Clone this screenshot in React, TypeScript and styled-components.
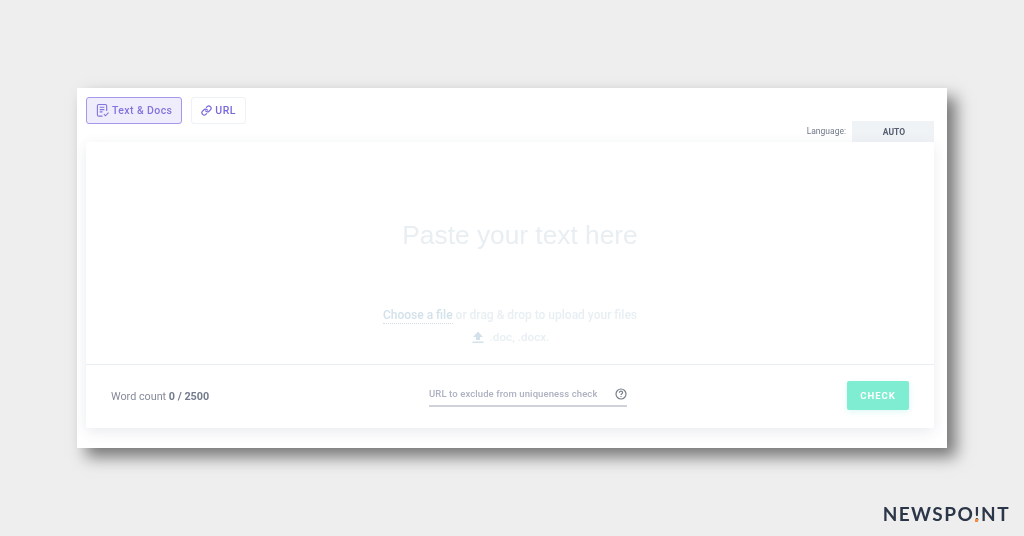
import React from "react";
import styled, {createGlobalStyle} from "styled-components";
import {Link} from "lucide-react";

const Global = createGlobalStyle`
  html, body {
    margin: 0;
    padding: 0;
    background-color: #eeeeee;
    font-family: Roboto, "Liberation Sans", sans-serif;
  }
`;

const Page = styled.div`
  width: 1024px;
  height: 536px;
  overflow: hidden;
  box-sizing: border-box;
  padding: 88px 14px 0 77px;
  display: flex;
  flex-direction: column;
`;

const Panel = styled.div`
  width: 870px;
  height: 360px;
  flex: none;
  box-sizing: border-box;
  padding: 9px 13px 20px 9px;
  background-color: #ffffff;
  box-shadow: 9px 9px 15px rgba(0, 0, 0, 0.5);
  display: flex;
  flex-direction: column;
  filter: blur(0.5px);
`;

const Toolbar = styled.div`
  height: 45px;
  flex: none;
  display: flex;
  justify-content: space-between;
`;

const Tabs = styled.div`
  display: flex;
  gap: 9px;
  align-items: flex-start;
`;

const Tab = styled.div<{ $active?: boolean }>`
  height: 27px;
  box-sizing: border-box;
  padding: 0 9px;
  display: flex;
  align-items: center;
  gap: 3px;
  font-size: 10.5px;
  font-weight: 500;
  letter-spacing: 0.4px;
  color: ${p => p.$active ? "#8174dc" : "#7568dc"};
  background-color: ${p => p.$active ? "#efedfb" : "#ffffff"};
  border: 1px solid ${p => p.$active ? "#a398ea" : "#eef1f6"};
  border-radius: 3px;
`;

const Language = styled.div`
  display: flex;
  align-items: flex-end;
  gap: 6px;
`;

const LanguageLabel = styled.span`
  font-size: 8.5px;
  line-height: 21px;
  color: #70788a;
`;

const LanguageValue = styled.div`
  width: 82px;
  height: 21px;
  padding-left: 2px;
  box-sizing: border-box;
  background-color: #f0f3f6;
  color: #565e70;
  font-size: 8.5px;
  font-weight: 700;
  display: flex;
  align-items: center;
  justify-content: center;
`;

const Card = styled.div`
  flex: 1;
  background-color: #ffffff;
  border-radius: 2px;
  box-shadow: 0 4px 14px rgba(40, 60, 90, 0.1);
  display: flex;
  flex-direction: column;
`;

const DropArea = styled.div`
  height: 223px;
  flex: none;
  box-sizing: border-box;
  border-bottom: 1px solid #e8eef4;
  display: flex;
  flex-direction: column;
  align-items: center;
`;

const Placeholder = styled.div`
  margin-top: 77px;
  margin-left: 20px;
  height: 32px;
  line-height: 32px;
  font-family: "Liberation Sans", Arial, sans-serif;
  font-size: 26.3px;
  color: #e8eef2;
`;

const UploadLine = styled.div`
  margin-top: 56px;
  height: 16px;
  line-height: 16px;
  font-size: 12px;
  font-weight: 500;
  color: #e8eff3;
`;

const ChooseFile = styled.span`
  color: #d3e2ea;
  border-bottom: 1px dotted #cfdfe8;
  padding-bottom: 1px;
`;

const Formats = styled.div`
  margin-top: 6px;
  height: 16px;
  display: flex;
  align-items: center;
  gap: 5px;
  font-size: 11.7px;
  font-weight: 500;
  color: #e8eff3;
`;

const Footer = styled.div`
  flex: 1;
  box-sizing: border-box;
  padding: 0 25px;
  display: grid;
  grid-template-columns: 318px 198px 1fr;
  align-items: center;
`;

const WordCount = styled.div`
  font-size: 10.8px;
  color: #858b99;

  b {
    font-weight: 700;
    color: #737b8c;
  }
`;

const ExcludeField = styled.div`
  height: 23px;
  margin-top: -3px;
  box-sizing: border-box;
  border-bottom: 2px solid #cfd2d9;
  display: flex;
  align-items: center;
  justify-content: space-between;
  padding-bottom: 1px;
  font-size: 9.5px;
  font-weight: 500;
  letter-spacing: 0.1px;
  color: #adb1c0;
`;

const CheckButton = styled.div`
  justify-self: end;
  width: 62px;
  height: 29px;
  margin-top: -2px;
  border-radius: 2px;
  background-color: #7fedd2;
  box-shadow: 0 2px 6px rgba(127, 237, 210, 0.25);
  color: #ffffff;
  font-size: 9.5px;
  font-weight: 700;
  letter-spacing: 1px;
  display: flex;
  align-items: center;
  justify-content: center;
`;

const Brand = styled.div`
  align-self: flex-end;
  margin-top: 56px;
  font-family: Lato, "Open Sans", sans-serif;
  font-size: 19px;
  line-height: 20px;
  font-weight: 700;
  letter-spacing: 1.45px;
  color: #2b3648;
  filter: blur(0.3px);
`;

const Dot = styled.span`
  color: #2b3648;
  position: relative;

  &::after {
    content: "";
    position: absolute;
    left: 1px;
    bottom: 3px;
    width: 3px;
    height: 3px;
    background-color: #f58a3c;
  }
`;

const DocCheckIcon = () => (
    <svg width={13} height={15} viewBox="0 0 14 15" fill="none" stroke="currentColor" strokeWidth={1.2}>
        <path d="M7 13.5 H3 C2 13.5 1.5 13 1.5 12 V2.5 C1.5 1.5 2 1 3 1 H10 C11 1 11.5 1.5 11.5 2.5 V8" />
        <path d="M4 4 H9 M4 6.5 H9 M4 9 H7" />
        <path d="M8.5 11.5 L10.2 13.2 L13.5 9.8" />
    </svg>
);

const UploadIcon = () => (
    <svg width={14} height={14} viewBox="0 0 14 14" fill="#d3e2ea">
        <path d="M7 1.5 L12 7 H9 V10 H5 V7 H2 Z" />
        <rect x={1.5} y={11.5} width={11} height={1.5} />
    </svg>
);

const HelpIcon = () => (
    <svg width={12} height={12} viewBox="0 0 12 12" fill="none" stroke="#7a7f8b" strokeWidth={1.2}>
        <circle cx={6} cy={6} r={5} />
        <path d="M4.4 4.8 C4.4 3.8 5.1 3.2 6 3.2 C6.9 3.2 7.6 3.8 7.6 4.6 C7.6 5.6 6 5.8 6 7" />
        <path d="M6 8 V9" />
    </svg>
);

const App = () => {
    return (
        <Page>
            <Global />
            <Panel>
                <Toolbar>
                    <Tabs>
                        <Tab $active={true}>
                            <DocCheckIcon />
                            Text &amp; Docs
                        </Tab>
                        <Tab>
                            <Link size={11} strokeWidth={2.6} />
                            URL
                        </Tab>
                    </Tabs>
                    <Language>
                        <LanguageLabel>Language:</LanguageLabel>
                        <LanguageValue>AUTO</LanguageValue>
                    </Language>
                </Toolbar>
                <Card>
                    <DropArea>
                        <Placeholder>Paste your text here</Placeholder>
                        <UploadLine>
                            <ChooseFile>Choose a file</ChooseFile> or drag &amp; drop to upload your files
                        </UploadLine>
                        <Formats>
                            <UploadIcon />
                            .doc, .docx.
                        </Formats>
                    </DropArea>
                    <Footer>
                        <WordCount>Word count <b>0 / 2500</b></WordCount>
                        <ExcludeField>
                            URL to exclude from uniqueness check
                            <HelpIcon />
                        </ExcludeField>
                        <CheckButton>CHECK</CheckButton>
                    </Footer>
                </Card>
            </Panel>
            <Brand>NEWSPO<Dot>!</Dot>NT</Brand>
        </Page>
    );
};

export default App;
